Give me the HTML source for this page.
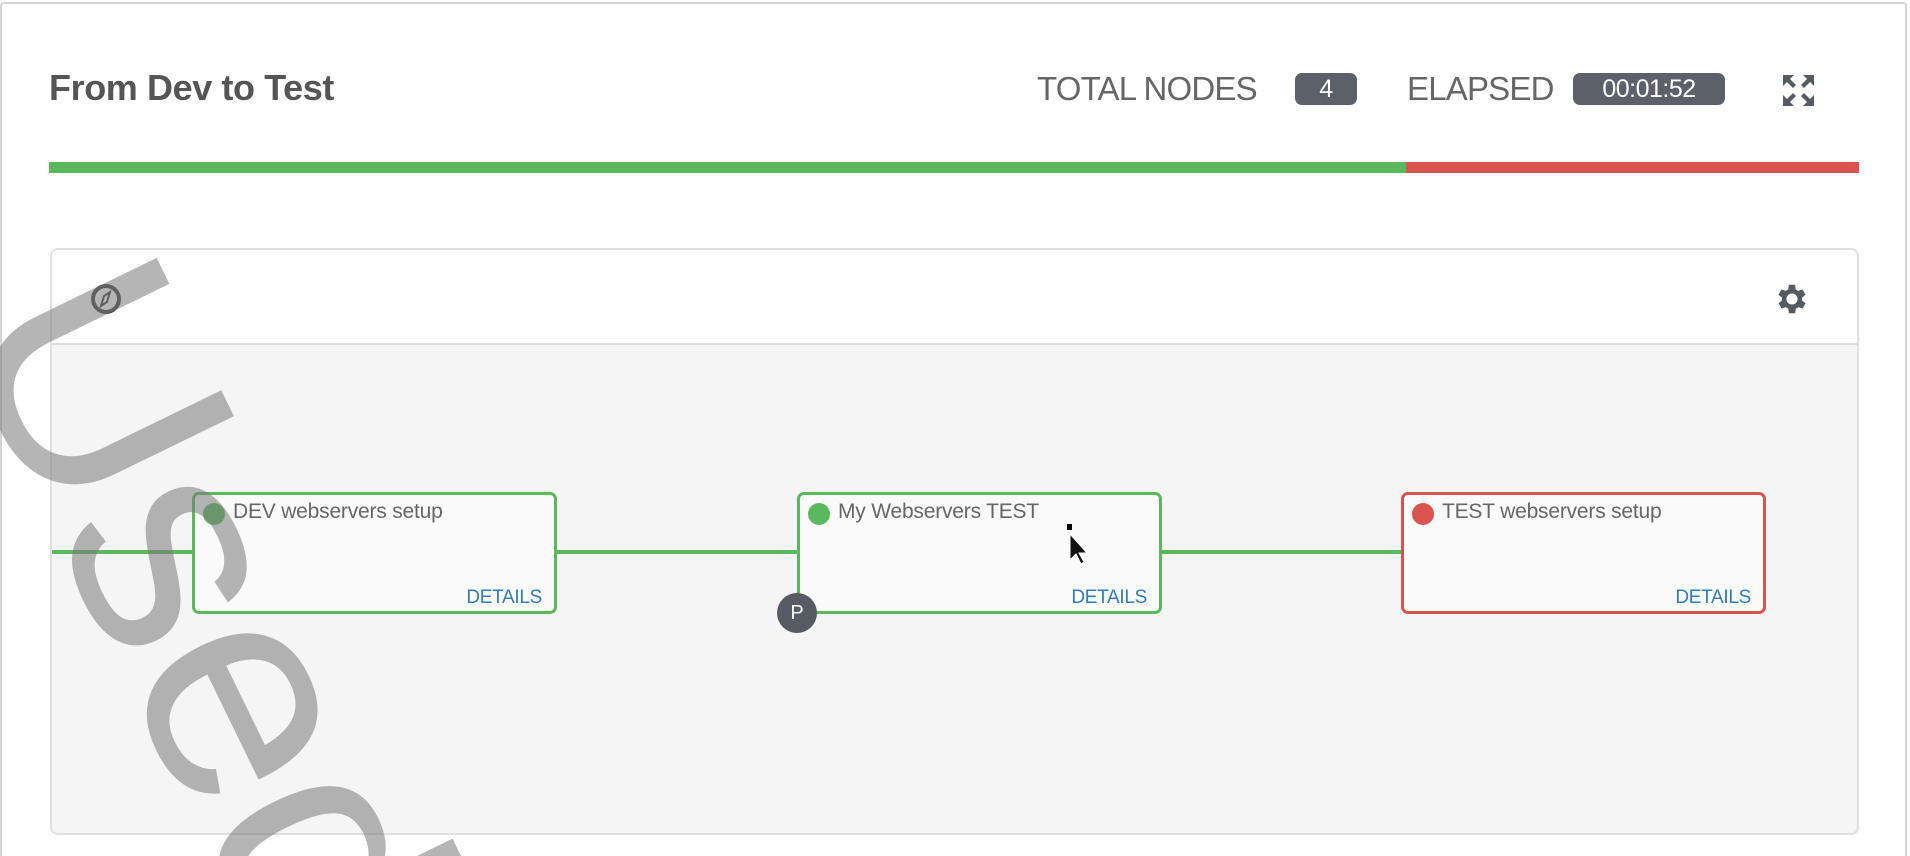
<!DOCTYPE html>
<html><head><meta charset="utf-8">
<style>
*{margin:0;padding:0;box-sizing:border-box}
html,body{width:1910px;height:856px;overflow:hidden;background:#fff}
body{font-family:"Liberation Sans",sans-serif}
#wrap{position:relative;width:1910px;height:856px;overflow:hidden}
.outer{position:absolute;left:0;top:2px;width:1907px;height:854px;border:2px solid #d4d4d4;border-bottom:none;border-radius:4px 4px 0 0}
.title{position:absolute;left:49px;top:67px;font-size:36px;font-weight:bold;color:#555;letter-spacing:-0.4px}
.lbl{position:absolute;top:70px;font-size:33px;color:#666;letter-spacing:-0.8px}
.badge{position:absolute;top:73px;height:32px;background:#5c6069;color:#fff;border-radius:7px;font-size:25px;text-align:center;line-height:32px;letter-spacing:-0.5px}
.bar{position:absolute;top:162px;height:11px}
.panel{position:absolute;left:50px;top:248px;width:1809px;height:587px;border:2px solid #e0e0e0;border-radius:8px;background:#f5f5f5;overflow:hidden}
.phead{position:absolute;left:0;top:0;width:100%;height:95px;background:#fff;border-bottom:2px solid #ddd}
.line{position:absolute;top:550px;height:4px;background:#5cb85c}
.node{position:absolute;top:492px;width:365px;height:122px;border:3px solid #5cb85c;border-radius:7px;background:#fafafa}
.node.red{border-color:#d9534f}
.dot{position:absolute;left:8px;top:8px;width:22px;height:22px;border-radius:50%;background:#5cb85c}
.nt{position:absolute;left:38px;top:5px;font-size:21px;color:#666;letter-spacing:-0.2px}
.det{position:absolute;right:12px;bottom:2px;font-size:19px;color:#337ab7;letter-spacing:-0.3px}
.p{position:absolute;left:777px;top:593px;width:40px;height:40px;border-radius:50%;background:#555a63;color:#fff;font-size:20px;text-align:center;line-height:40px}
.wm{position:absolute;left:190px;top:215px;transform-origin:0 0;transform:rotate(64deg);font-size:310px;line-height:1;color:rgba(120,120,120,0.55);white-space:nowrap}
</style></head><body><div id="wrap">
<div class="outer"></div>
<div class="title">From Dev to Test</div>
<div class="lbl" style="left:1037px">TOTAL NODES</div>
<div class="badge" style="left:1295px;width:62px">4</div>
<div class="lbl" style="left:1407px">ELAPSED</div>
<div class="badge" style="left:1573px;width:152px">00:01:52</div>
<svg style="position:absolute;left:1781px;top:73px" width="35" height="35" viewBox="0 0 35 35" fill="#555a63">
<path d="M2 2h11l-4 4 6 6-3 3-6-6-4 4z"/><path d="M33 2v11l-4-4-6 6-3-3 6-6-4-4z"/><path d="M2 33v-11l4 4 6-6 3 3-6 6 4 4z"/><path d="M33 33h-11l4-4-6-6 3-3 6 6 4-4z"/></svg>
<div class="bar" style="left:49px;width:1357px;background:#5cb85c"></div>
<div class="bar" style="left:1406px;width:453px;background:#d9534f"></div>
<div class="panel"><div class="phead"></div></div>
<svg style="position:absolute;left:89px;top:282px" width="34" height="34" viewBox="0 0 34 34"><circle cx="17" cy="17" r="13" fill="none" stroke="#444" stroke-width="4"/><path d="M21 10l-3 10-6 4 3-10z" fill="none" stroke="#444" stroke-width="2"/></svg>
<svg style="position:absolute;left:1773px;top:280px" width="38" height="38" viewBox="0 0 24 24"><path fill="#555a63" d="M19.4 13a7.5 7.5 0 0 0 0-2l2.1-1.6-2-3.5-2.5 1a7 7 0 0 0-1.7-1L15 3h-4l-.4 2.9a7 7 0 0 0-1.7 1l-2.5-1-2 3.5L6.6 11a7.5 7.5 0 0 0 0 2l-2.1 1.6 2 3.5 2.5-1a7 7 0 0 0 1.7 1L11 21h4l.4-2.9a7 7 0 0 0 1.7-1l2.5 1 2-3.5zM13 15.5a3.5 3.5 0 1 1 0-7 3.5 3.5 0 0 1 0 7z" transform="translate(-1 0)"/></svg>
<div class="line" style="left:52px;width:142px"></div>
<div class="line" style="left:555px;width:245px"></div>
<div class="line" style="left:1158px;width:246px"></div>
<div class="node" style="left:192px"><div class="dot"></div><div class="nt">DEV webservers setup</div><div class="det">DETAILS</div></div>
<div class="node" style="left:797px"><div class="dot"></div><div class="nt">My Webservers TEST</div><div class="det">DETAILS</div></div>
<div class="node red" style="left:1401px"><div class="dot" style="background:#d9534f"></div><div class="nt">TEST webservers setup</div><div class="det">DETAILS</div></div>
<div class="p">P</div>
<svg style="position:absolute;left:1065px;top:524px" width="24" height="50" viewBox="0 0 24 50"><rect x="2" y="0" width="5" height="6" fill="#000"/><path d="M5 10v26l6-6 5 10 3-2-5-9h8z" fill="#111" stroke="#fff" stroke-width="1"/></svg>
<div class="wm">Used</div>
</div></body></html>
